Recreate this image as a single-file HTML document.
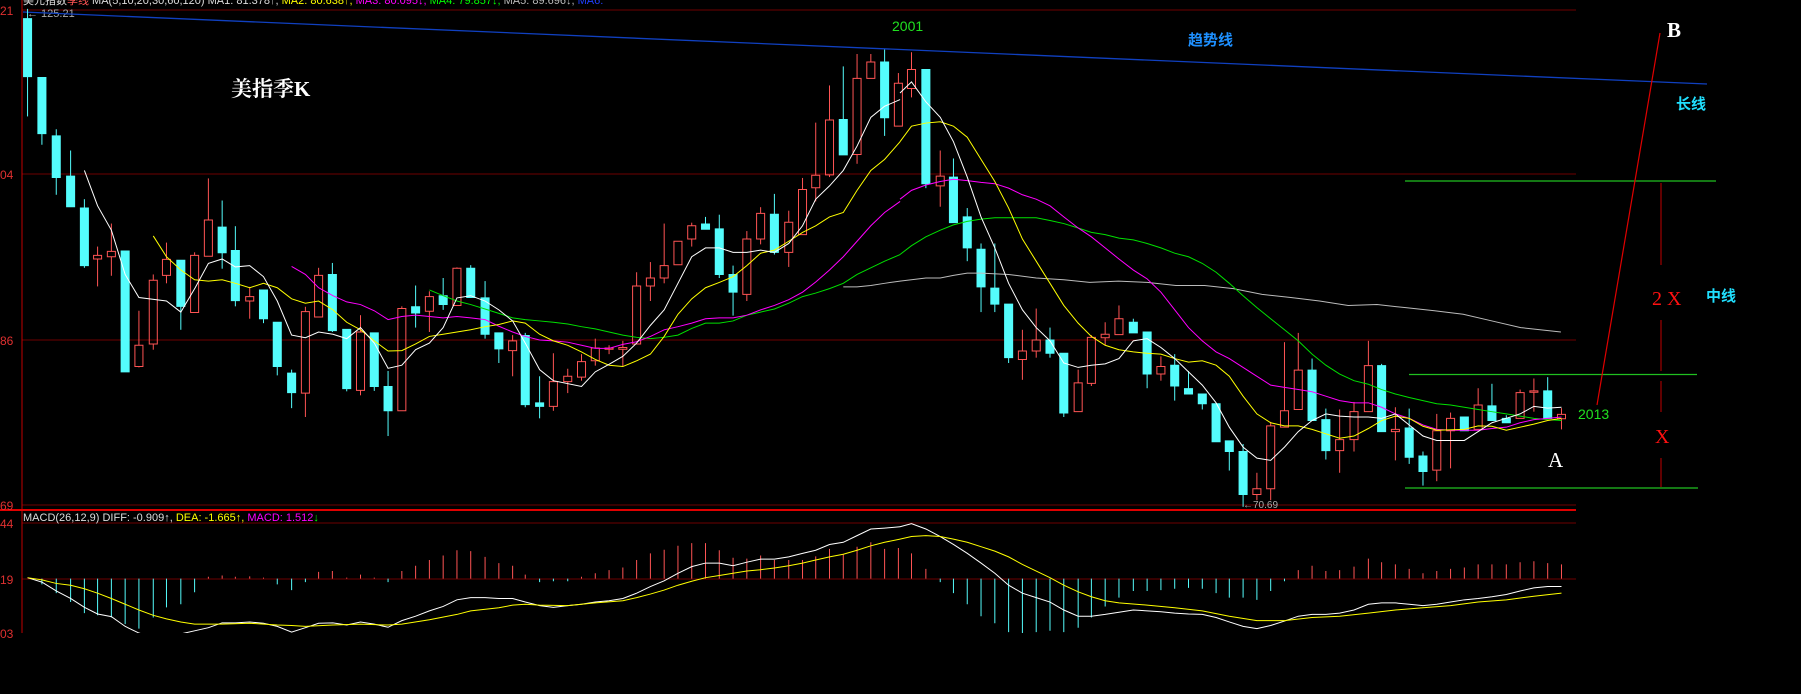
<!DOCTYPE html>
<html><head><meta charset="utf-8"><style>
html,body{margin:0;padding:0;background:#000;width:1801px;height:694px;overflow:hidden}
svg{display:block}
text{font-family:"Liberation Sans","Noto Sans CJK SC",sans-serif}
</style></head><body>
<svg id="s" xmlns="http://www.w3.org/2000/svg" width="1801" height="694" viewBox="0 0 1801 694">
<rect width="1801" height="694" fill="#000"/>
<defs>
</defs>
<g stroke="#6e0000" stroke-width="1">
<line x1="22" y1="10" x2="1576" y2="10"/>
<line x1="22" y1="174" x2="1576" y2="174"/>
<line x1="22" y1="340" x2="1576" y2="340"/>
<line x1="22" y1="505" x2="1576" y2="505"/>
<line x1="22" y1="523" x2="1576" y2="523"/>
<line x1="22" y1="579" x2="1576" y2="579"/>
</g>
<line x1="22" y1="0" x2="22" y2="633" stroke="#c00000"/>
<line x1="0" y1="510" x2="1576" y2="510" stroke="#e00000" stroke-width="2"/>
<g font-size="12" fill="#e03030">
<text x="0" y="15">21</text><text x="0" y="179">04</text><text x="0" y="345">86</text><text x="0" y="510">69</text>
<text x="0" y="528">44</text><text x="0" y="584">19</text><text x="0" y="638">03</text>
</g>
<text x="23" y="4" font-size="11" fill="#ddd">美元指数<tspan fill="#ff5454">季线</tspan> MA(5,10,20,30,60,120) MA1: 81.378↑, <tspan fill="#ffff00">MA2: 80.638↑,</tspan> <tspan fill="#ff00ff">MA3: 80.095↓,</tspan> <tspan fill="#00ff00">MA4: 79.857↓,</tspan> <tspan fill="#bbb">MA5: 89.696↓,</tspan> <tspan fill="#2040ff">MA6:</tspan></text>
<text x="27" y="17" font-size="11" fill="#aaa">← 125.21</text>
<text x="23" y="521" font-size="11" fill="#ddd">MACD(26,12,9) DIFF: -0.909↑, <tspan fill="#ffff00">DEA: -1.665↑,</tspan> <tspan fill="#ff00ff">MACD: 1.512</tspan><tspan fill="#00ff00">↓</tspan></text>
<line x1="23" y1="12" x2="1707" y2="84" stroke="#1040c0" stroke-width="1.3"/>
<g id="g1" transform="scale(0.57405,0.44267)"></g>
<g id="g2" transform="translate(900,0) scale(0.5747,0.44267)"></g>
<g stroke="#20c020" stroke-width="1.2">
<line x1="1405" y1="181" x2="1716" y2="181"/>
<line x1="1409" y1="374.5" x2="1697" y2="374.5"/>
<line x1="1405" y1="488" x2="1698" y2="488"/>
</g>
<line x1="1597" y1="405" x2="1660" y2="33" stroke="#e00000" stroke-width="1.2"/>
<g stroke="#c00000" stroke-width="1">
<line x1="1661" y1="183" x2="1661" y2="265"/>
<line x1="1661" y1="320" x2="1661" y2="371"/>
<line x1="1661" y1="381" x2="1661" y2="412"/>
<line x1="1661" y1="458" x2="1661" y2="487"/>
</g>
<text x="1652" y="305" font-size="20" fill="#ff1010" style="font-family:'Liberation Serif',serif">2 X</text>
<text x="1655" y="443" font-size="20" fill="#ff1010" style="font-family:'Liberation Serif',serif">X</text>
<text x="1706" y="301" font-size="15" font-weight="bold" fill="#20e0ff">中线</text>
<text x="1676" y="109" font-size="15" font-weight="bold" fill="#20e0ff">长线</text>
<text x="1188" y="45" font-size="15" font-weight="bold" fill="#1e90ff">趋势线</text>
<text x="1667" y="37" font-size="21" fill="#fff" font-weight="bold" style="font-family:'Liberation Serif',serif">B</text>
<text x="1548" y="467" font-size="21" fill="#fff" style="font-family:'Liberation Serif',serif">A</text>
<text x="1578" y="419" font-size="14" fill="#20e020">2013</text>
<text x="892" y="31" font-size="14" fill="#20e020">2001</text>
<text x="231" y="96" font-size="21" font-weight="bold" fill="#fff" style="font-family:'Liberation Serif','Noto Serif CJK SC',serif">美指季K</text>
<text x="1243" y="508" font-size="10" fill="#aaa">←70.69</text>
</svg>
<script>
var NS="http://www.w3.org/2000/svg";
function el(p,t,a){var e=document.createElementNS(NS,t);for(var k in a)e.setAttribute(k,a[k]);e.setAttribute("vector-effect","non-scaling-stroke");p.appendChild(e);return e;}
var C="#54fcfc",R="#ff5454";
var d1=[[48,42,173,20,263,"c"],[73,175,302,175,327,"c"],[98,307,401,292,440,"c"],[123,398,467,340,467,"c"],[147,470,600,450,605,"c"],[170,577,585,557,647,"r"],[194,568,580,505,623,"r"],[218,567,840,567,840,"c"],[242,780,828,702,830,"r"],[267,633,777,620,790,"r"],[290,586,622,548,640,"r"],[315,588,692,588,745,"c"],[339,577,706,570,706,"r"],[363,497,579,403,579,"r"],[387,513,571,453,607,"c"],[410,566,679,511,692,"c"],[435,670,680,648,720,"r"],[459,655,720,655,730,"c"],[483,728,828,728,848,"c"],[508,843,887,835,922,"c"],[532,704,888,693,942,"r"],[555,622,716,605,716,"r"],[579,620,747,594,750,"c"],[604,744,878,744,884,"c"],[628,750,882,712,893,"r"],[652,752,873,752,883,"c"],[676,873,928,838,985,"c"],[700,697,928,692,928,"r"],[724,693,707,645,740,"c"],[748,670,703,658,750,"r"],[772,668,688,628,700,"c"],[796,606,690,604,690,"r"],[820,606,672,599,672,"c"],[845,673,755,635,765,"c"],[869,752,788,752,820,"c"],[893,770,792,757,850,"r"],[915,758,914,752,920,"c"],[940,910,918,850,945,"c"],[964,862,918,798,928,"r"],[989,850,862,833,888,"r"],[1013,817,852,800,860,"r"],[1037,786,815,765,826,"r"],[1061,786,789,780,800,"r"],[1085,785,789,770,828,"r"],[1109,646,777,615,777,"r"],[1133,628,646,592,680,"r"],[1157,600,628,505,640,"r"],[1181,545,598,545,598,"r"],[1205,510,540,503,557,"r"],[1229,506,518,490,518,"c"],[1253,517,620,485,628,"c"],[1277,620,660,600,713,"c"],[1301,540,665,522,680,"r"],[1325,482,540,468,552,"r"],[1349,484,570,438,575,"c"],[1374,502,570,476,603,"r"],[1398,428,530,402,530,"r"],[1421,396,424,277,455,"r"],[1445,271,395,193,400,"r"],[1469,270,350,150,350,"c"],[1493,177,349,122,370,"r"],[1517,140,177,122,177,"r"],[1541,140,266,112,307,"c"],[1565,188,285,165,285,"r"]];
var d2=[[20,157,200,118,220,"r"],[45,157,415,157,425,"c"],[70,398,420,340,467,"r"],[93,400,503,358,503,"c"],[117,490,560,470,590,"c"],[141,563,648,550,705,"c"],[165,651,687,550,705,"c"],[189,687,808,687,820,"c"],[213,793,812,745,858,"r"],[237,768,793,697,808,"r"],[261,768,798,740,808,"c"],[285,798,933,798,942,"c"],[310,865,930,835,930,"r"],[333,762,866,757,872,"r"],[357,755,763,728,780,"r"],[381,720,756,690,756,"r"],[406,728,752,720,752,"c"],[430,750,845,750,877,"c"],[454,828,845,805,860,"r"],[478,825,872,800,905,"c"],[502,878,890,838,890,"c"],[526,890,912,890,925,"c"],[550,912,998,912,998,"c"],[573,996,1020,996,1063,"c"],[597,1020,1117,1003,1145,"c"],[621,1104,1117,1068,1130,"r"],[645,962,1104,953,1130,"r"],[669,928,965,773,965,"r"],[693,836,925,752,925,"r"],[717,836,950,810,950,"c"],[741,948,1018,923,1038,"c"],[765,993,1018,925,1068,"r"],[790,930,993,908,1020,"r"],[815,826,930,770,930,"r"],[838,826,975,822,975,"c"],[862,970,975,920,1040,"r"],[886,967,1033,923,1048,"c"],[910,1030,1065,1020,1097,"c"],[934,973,1062,935,1087,"r"],[958,945,973,932,1058,"r"],[982,942,973,942,973,"c"],[1006,915,970,877,970,"r"],[1030,917,950,867,950,"c"],[1055,945,955,938,955,"c"],[1079,887,945,880,945,"r"],[1103,883,885,855,930,"r"],[1127,883,945,852,945,"c"],[1151,936,946,922,970,"r"]];
function candles(g,d){d.forEach(function(c){var x=c[0],t=c[1],b=c[2],h=c[3],l=c[4],col=c[5]=="c"?C:R;
if(b-t<3){b=t+3;}
el(g,"line",{x1:x,y1:h,x2:x,y2:t,stroke:col,"stroke-width":1});
el(g,"line",{x1:x,y1:b,x2:x,y2:l,stroke:col,"stroke-width":1});
if(c[5]=="c")el(g,"rect",{x:x-7,y:t,width:14,height:b-t,fill:C,stroke:C,"stroke-width":1});
else el(g,"rect",{x:x-7,y:t,width:14,height:b-t,fill:"none",stroke:R,"stroke-width":1});});}
function poly(g,pts,col,w){el(g,"polyline",{points:pts.map(function(p){return p.join(",")}).join(" "),fill:"none",stroke:col,"stroke-width":w||1});}
var g1=document.getElementById("g1"),g2=document.getElementById("g2");
var cp=document.createElementNS(NS,"clipPath");cp.setAttribute("id","mc1");var cr=document.createElementNS(NS,"rect");cr.setAttribute("x",-100);cr.setAttribute("y",1155);cr.setAttribute("width",2000);cr.setAttribute("height",275);cp.appendChild(cr);document.querySelector("defs").appendChild(cp);
var mg1=el(g1,"g",{"clip-path":"url(#mc1)"});
var mg2=el(g2,"g",{"clip-path":"url(#mc1)"});
var b1=[[73,1320],[98,1340],[123,1360],[147,1385],[170,1390],[194,1395],[218,1410],[242,1420],[267,1395],[290,1372],[315,1365],[339,1338],[363,1303],[387,1300],[410,1303],[435,1302],[459,1305],[483,1320],[508,1333],[532,1315],[555,1292],[579,1290],[604,1305],[628,1298],[652,1305],[676,1315],[700,1290],[724,1278],[748,1265],[772,1255],[796,1243],[820,1245],[845,1258],[869,1272],[893,1278],[915,1298],[940,1315],[964,1313],[989,1313],[1013,1303],[1037,1295],[1061,1288],[1085,1282],[1109,1265],[1133,1250],[1157,1242],[1181,1233],[1205,1227],[1229,1227],[1253,1243],[1277,1260],[1301,1262],[1325,1255],[1349,1265],[1374,1265],[1398,1265],[1421,1257],[1445,1240],[1469,1252],[1493,1235],[1517,1225],[1541,1240],[1565,1238]];
var b2=[[20,1250],[45,1285],[70,1315],[93,1340],[117,1365],[141,1392],[165,1408],[189,1428],[213,1430],[237,1428],[261,1425],[285,1428],[310,1418],[333,1395],[357,1370],[381,1350],[406,1335],[430,1335],[454,1333],[478,1330],[502,1328],[526,1330],[550,1340],[573,1350],[597,1350],[621,1355],[645,1335],[669,1313],[693,1288],[717,1278],[741,1290],[765,1288],[790,1280],[815,1262],[838,1270],[862,1275],[886,1285],[910,1295],[934,1290],[958,1285],[982,1282],[1006,1275],[1030,1275],[1055,1275],[1079,1270],[1103,1268],[1127,1272],[1151,1275]];
function bars(g,b){b.forEach(function(p){el(g,"line",{x1:p[0],y1:1307,x2:p[0],y2:p[1],stroke:p[1]>1307?C:R,"stroke-width":1});});}
bars(mg1,b1);bars(mg2,b2);
poly(mg1,[[48,1305],[73,1315],[98,1335],[123,1352],[147,1372],[170,1387],[194,1393],[218,1415],[242,1430],[267,1440],[290,1432],[315,1432],[339,1425],[363,1418],[387,1407],[410,1407],[435,1405],[459,1408],[483,1415],[508,1428],[532,1418],[555,1408],[580,1407],[604,1412],[628,1405],[652,1410],[676,1417],[700,1402],[724,1392],[748,1380],[772,1370],[796,1355],[820,1350],[845,1350],[869,1352],[893,1352],[915,1360],[940,1368],[964,1372],[989,1368],[1013,1365],[1037,1360],[1061,1357],[1085,1352],[1109,1340],[1133,1325],[1157,1312],[1181,1295],[1205,1280],[1229,1272],[1253,1272],[1277,1278],[1301,1270],[1325,1263],[1349,1263],[1374,1258],[1398,1250],[1421,1243],[1445,1230],[1469,1225],[1493,1210],[1517,1195],[1541,1193],[1568,1190]],"#fff");
poly(mg2,[[0,1190],[20,1183],[45,1195],[70,1212],[93,1230],[117,1250],[141,1272],[165,1295],[189,1322],[213,1340],[237,1350],[261,1360],[285,1378],[310,1392],[333,1392],[357,1388],[381,1383],[406,1378],[430,1380],[454,1382],[478,1385],[502,1387],[526,1388],[550,1395],[573,1405],[597,1415],[621,1420],[645,1413],[669,1403],[693,1392],[717,1388],[741,1388],[765,1385],[790,1378],[815,1365],[838,1362],[862,1362],[886,1365],[910,1368],[934,1365],[958,1360],[982,1355],[1006,1352],[1030,1348],[1055,1343],[1079,1335],[1103,1328],[1127,1325],[1151,1325]],"#fff");
poly(mg1,[[48,1305],[73,1310],[98,1318],[123,1322],[147,1330],[170,1340],[194,1352],[218,1365],[242,1378],[267,1390],[290,1398],[315,1405],[339,1410],[387,1410],[435,1408],[459,1410],[483,1412],[508,1413],[532,1415],[580,1412],[628,1410],[676,1412],[700,1410],[748,1400],[796,1388],[820,1380],[869,1373],[893,1367],[915,1365],[940,1367],[989,1368],[1037,1362],[1085,1357],[1109,1350],[1133,1342],[1157,1333],[1181,1322],[1205,1313],[1229,1305],[1253,1300],[1277,1295],[1301,1290],[1325,1287],[1349,1283],[1374,1278],[1398,1272],[1421,1265],[1445,1258],[1469,1252],[1493,1243],[1517,1233],[1541,1225],[1568,1218]],"#ffff00");
poly(mg2,[[0,1218],[20,1212],[45,1210],[70,1212],[93,1218],[117,1225],[141,1235],[165,1245],[189,1258],[213,1275],[237,1290],[261,1305],[285,1322],[310,1337],[333,1348],[357,1357],[381,1362],[430,1367],[478,1373],[526,1380],[573,1392],[621,1402],[669,1402],[717,1395],[765,1392],[815,1385],[862,1378],[910,1373],[958,1368],[1006,1360],[1055,1355],[1103,1347],[1151,1340]],"#ffff00");
candles(g1,d1);candles(g2,d2);
poly(g1,[[1469,648],[1493,648],[1517,645],[1541,640],[1568,635]],"#bbb");
poly(g2,[[0,635],[45,628],[70,628],[93,622],[117,617],[141,617],[189,620],[237,628],[285,632],[330,638],[380,635],[430,638],[480,645],[530,645],[580,652],[630,665],[680,672],[730,680],[780,690],[830,688],[880,695],[930,702],[980,710],[1030,725],[1080,740],[1150,750]],"#bbb");
poly(g1,[[748,655],[772,668],[796,680],[820,688],[845,698],[869,708],[893,718],[915,722],[940,725],[964,728],[989,732],[1013,738],[1037,743],[1061,750],[1085,757],[1109,762],[1133,765],[1157,762],[1181,757],[1205,742],[1229,730],[1253,730],[1277,725],[1301,712],[1325,705],[1349,698],[1374,685],[1398,670],[1421,662],[1445,652],[1469,640],[1493,620],[1517,605],[1541,590],[1568,575]],"#00e000");
poly(g2,[[0,575],[20,555],[45,535],[70,520],[93,508],[117,500],[141,495],[165,492],[189,492],[237,492],[261,498],[285,505],[310,515],[333,525],[357,530],[381,538],[406,542],[430,550],[454,560],[478,572],[502,580],[526,595],[550,615],[573,640],[597,668],[621,695],[645,720],[669,745],[693,770],[717,800],[741,825],[765,845],[790,860],[815,868],[838,880],[862,890],[886,898],[910,905],[934,912],[958,915],[982,920],[1006,925],[1030,930],[1055,935],[1079,940],[1103,945],[1127,948],[1151,950]],"#00e000");
poly(g1,[[508,602],[532,620],[555,650],[580,668],[604,682],[628,688],[652,702],[676,722],[700,715],[724,712],[748,715],[772,718],[796,715],[820,718],[845,722],[869,737],[893,750],[915,760],[940,768],[964,770],[989,773],[1013,780],[1037,787],[1061,787],[1085,778],[1109,772],[1133,760],[1157,745],[1181,738],[1205,730],[1229,720],[1253,718],[1277,718],[1301,712],[1325,700],[1349,690],[1374,677],[1398,660],[1421,637],[1445,610],[1469,580],[1493,545],[1517,510],[1541,480],[1568,455]],"#ff00ff");
poly(g2,[[0,450],[20,430],[45,418],[70,410],[93,405],[117,408],[141,412],[165,415],[189,425],[213,440],[237,450],[261,465],[285,490],[310,515],[333,535],[357,560],[381,585],[406,610],[430,630],[454,660],[478,700],[502,740],[526,770],[550,795],[573,810],[597,830],[621,850],[645,870],[669,875],[693,880],[717,885],[741,895],[765,905],[790,910],[815,910],[838,920],[862,935],[886,945],[910,960],[934,970],[958,972],[1006,972],[1030,968],[1055,965],[1079,955],[1103,948],[1127,945],[1151,942]],"#ff00ff");
poly(g1,[[267,533],[290,580],[315,610],[339,632],[363,635],[387,632],[410,640],[435,650],[459,640],[483,650],[508,675],[532,685],[555,680],[580,700],[604,728],[628,745],[652,770],[676,793],[700,792],[724,777],[748,760],[772,755],[796,750],[820,745],[845,738],[869,733],[893,725],[915,730],[940,755],[964,770],[989,780],[1013,795],[1037,812],[1061,825],[1085,828],[1109,815],[1133,800],[1157,760],[1181,710],[1205,675],[1229,650],[1253,638],[1277,625],[1301,600],[1325,572],[1349,565],[1374,545],[1398,525],[1421,510],[1445,490],[1469,480],[1493,430],[1517,385],[1541,360],[1568,320]],"#ffff00");
poly(g2,[[0,320],[20,285],[45,278],[70,275],[93,285],[117,310],[141,360],[165,410],[189,470],[213,540],[237,590],[261,640],[285,690],[310,730],[333,760],[357,780],[381,790],[406,795],[430,798],[454,800],[478,810],[502,818],[526,815],[550,825],[573,850],[597,895],[621,935],[645,955],[669,962],[693,962],[717,970],[741,980],[765,990],[790,985],[815,968],[838,950],[862,940],[886,945],[910,963],[934,972],[982,970],[1006,962],[1030,963],[1055,972],[1079,965],[1103,958],[1127,950],[1151,945]],"#ffff00");
poly(g1,[[147,385],[170,465],[194,520],[218,620],[242,672],[290,680],[315,705],[340,650],[363,595],[387,585],[410,603],[435,600],[459,625],[483,680],[508,757],[532,763],[555,750],[580,755],[604,765],[628,740],[652,775],[676,832],[700,825],[724,790],[748,775],[772,740],[796,673],[820,668],[845,680],[869,700],[893,725],[915,775],[940,835],[964,860],[1013,873],[1037,840],[1061,823],[1085,805],[1109,775],[1133,735],[1157,700],[1181,640],[1205,580],[1229,560],[1253,560],[1277,570],[1301,570],[1325,565],[1349,570],[1374,550],[1398,510],[1421,450],[1445,420],[1469,385],[1493,330],[1517,265],[1541,240],[1568,225]],"#fff");
poly(g2,[[0,210],[20,185],[45,230],[70,265],[93,320],[117,400],[141,490],[165,560],[189,640],[213,700],[237,740],[261,770],[285,820],[310,830],[333,825],[357,822],[381,810],[406,770],[430,765],[454,785],[478,810],[502,840],[526,870],[550,910],[573,965],[597,1010],[621,1035],[645,1040],[669,1010],[693,975],[717,950],[741,935],[765,940],[790,942],[815,942],[838,945],[862,935],[886,960],[910,985],[934,995],[982,995],[1006,975],[1030,955],[1055,945],[1079,935],[1103,918],[1127,922],[1151,920]],"#fff");
</script>
</body></html>
